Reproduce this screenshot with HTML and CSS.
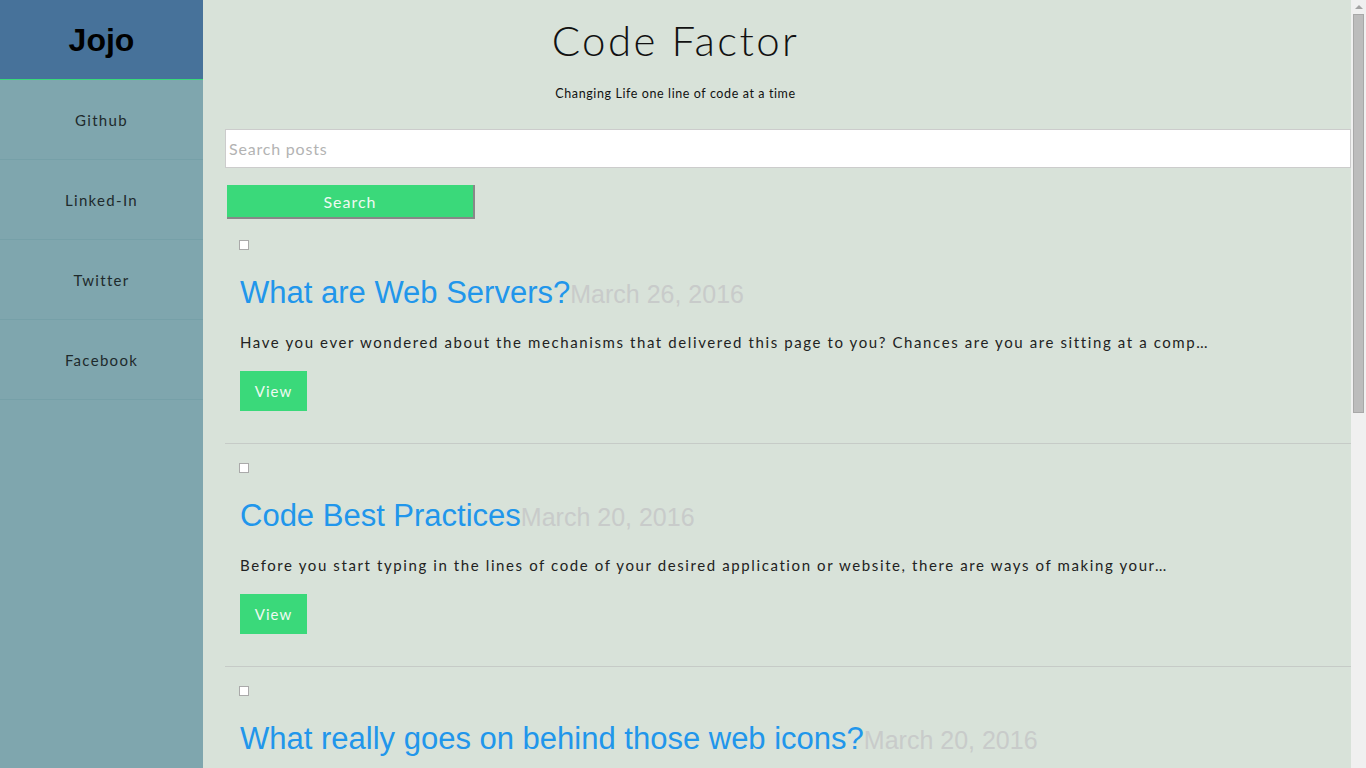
FILE: index.html
```html
<!DOCTYPE html>
<html lang="en">
<head>
<meta charset="utf-8">
<title>Code Factor</title>
<link rel="stylesheet" href="styles.css">
</head>
<body>
<aside class="sidebar">
  <div class="brand">Jojo</div>
  <nav class="nav">
    <a class="nav-item" href="#">Github</a>
    <a class="nav-item" href="#">Linked-In</a>
    <a class="nav-item" href="#">Twitter</a>
    <a class="nav-item" href="#">Facebook</a>
  </nav>
</aside>
<div class="scrollbar" aria-hidden="true">
  <span class="scroll-arrow"></span>
  <span class="scroll-thumb"></span>
</div>
<header class="masthead">
  <h1 class="site-title">Code Factor</h1>
  <p class="tagline">Changing Life one line of code at a time</p>
</header>
<main class="content">
  <form class="search">
    <input class="search-input" type="text" placeholder="Search posts">
    <button class="search-btn" type="button">Search</button>
  </form>
  <article class="post">
    <span class="thumb"></span>
    <h2 class="post-title">What are Web Servers?<span class="post-date">March 26, 2016</span></h2>
    <p class="excerpt">Have you ever wondered about the mechanisms that delivered this page to you? Chances are you are sitting at a comp…</p>
    <a class="view-btn" href="#">View</a>
  </article>
  <article class="post">
    <span class="thumb"></span>
    <h2 class="post-title">Code Best Practices<span class="post-date">March 20, 2016</span></h2>
    <p class="excerpt">Before you start typing in the lines of code of your desired application or website, there are ways of making your…</p>
    <a class="view-btn" href="#">View</a>
  </article>
  <article class="post">
    <span class="thumb"></span>
    <h2 class="post-title">What really goes on behind those web icons?<span class="post-date">March 20, 2016</span></h2>
    <p class="excerpt">Icons are everywhere on the web, but have you ever wondered what actually happens when a browser draws one…</p>
    <a class="view-btn" href="#">View</a>
  </article>
</main>
</body>
</html>
```
FILE: styles.css
```css
html, body {
  margin: 0;
  padding: 0;
}
body {
  background: #d8e2d9;
  font-family: "Lato", "Open Sans", sans-serif;
  color: #222;
}
.sidebar {
  position: fixed;
  top: 0;
  left: 0;
  bottom: 0;
  width: 203px;
  background: #7fa6ae;
  z-index: 2;
}
.brand {
  height: 80px;
  box-sizing: border-box;
  padding-top: 2px;
  border-bottom: 1px solid #3ad97a;
  background: #47729a;
  display: flex;
  align-items: center;
  justify-content: center;
  font-family: "Liberation Sans", Arial, sans-serif;
  font-weight: bold;
  font-size: 32px;
  color: #000;
}
.nav {
  display: flex;
  flex-direction: column;
}
.nav-item {
  height: 79px;
  border-bottom: 1px solid #76a0a8;
  display: flex;
  align-items: center;
  justify-content: center;
  color: #1e2a2c;
  text-decoration: none;
  font-size: 15px;
  letter-spacing: 1.3px;
}
.scrollbar {
  position: fixed;
  top: 0;
  right: 0;
  bottom: 0;
  width: 15px;
  background: #f0f0f0;
  z-index: 3;
}
.scroll-arrow {
  position: absolute;
  top: 5px;
  left: 4px;
  width: 0;
  height: 0;
  border-left: 4px solid transparent;
  border-right: 4px solid transparent;
  border-bottom: 4px solid #a3a3a3;
}
.scroll-thumb {
  position: absolute;
  top: 14px;
  left: 2px;
  width: 9px;
  height: 397px;
  background: #bcbcbc;
  border: 1px solid #a8a8a8;
}
.masthead {
  text-align: center;
  padding-top: 16px;
  padding-right: 15px;
  height: 111px;
  box-sizing: border-box;
}
.site-title {
  margin: 0;
  font-weight: 300;
  font-size: 42px;
  letter-spacing: 2.4px;
  line-height: 48px;
  color: #111;
}
.tagline {
  margin: 22px 0 0;
  font-size: 12.5px;
  letter-spacing: 0.6px;
  color: #111;
}
.content {
  margin-left: 225px;
  margin-right: 15px;
}
.search {
  display: flex;
  flex-direction: column;
  align-items: flex-start;
  padding-top: 18px;
}
.search-input {
  box-sizing: border-box;
  width: 100%;
  height: 39px;
  border: 1px solid #cccccc;
  background: #fff;
  padding: 0 3px;
  font-family: inherit;
  font-size: 16px;
  letter-spacing: 0.8px;
  margin: 0;
}
.search-input::placeholder {
  color: #b3b3b3;
}
.search-btn {
  margin: 17px 0 0 2px;
  width: 248px;
  height: 34px;
  background: #3ad97a;
  border: none;
  border-right: 2px solid #888;
  border-bottom: 2px solid #888;
  color: #eefaf2;
  font-family: inherit;
  font-size: 16px;
  letter-spacing: 1px;
  padding: 0;
}
.post {
  padding: 19px 15px 32px;
  border-bottom: 1px solid #c6cbc7;
  display: flex;
  flex-direction: column;
  align-items: flex-start;
}
.post:first-of-type {
  padding-top: 21px;
}
.thumb {
  display: block;
  width: 8px;
  height: 8px;
  margin-left: -1px;
  border: 1px solid #aaa;
  background: #fff;
}
.post-title {
  margin: 25px 0 0;
  font-family: "Liberation Sans", Arial, sans-serif;
  font-weight: normal;
  font-size: 31px;
  line-height: 36px;
  color: #2196eb;
}
.post-date {
  font-size: 25px;
  color: #c8cbca;
}
.excerpt {
  margin: 21px 0 0;
  font-size: 15px;
  letter-spacing: 1.6px;
  color: #222;
  line-height: 18px;
}
.view-btn {
  margin-top: 20px;
  width: 67px;
  height: 40px;
  display: flex;
  align-items: center;
  justify-content: center;
  background: #3ad97a;
  color: #eefaf2;
  text-decoration: none;
  font-size: 15px;
  letter-spacing: 1px;
}
```
